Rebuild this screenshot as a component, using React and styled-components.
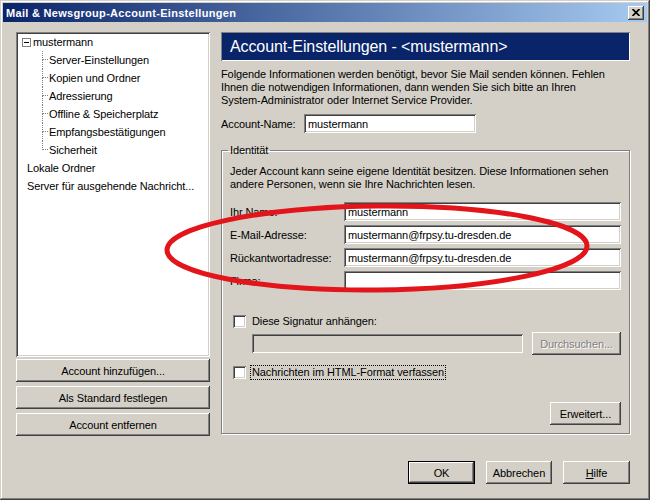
import React from 'react';
import styled, { createGlobalStyle } from 'styled-components';

const FACE = '#d4d0c8';
const raised = `inset -1px -1px #404040, inset 1px 1px #fff, inset -2px -2px #808080, inset 2px 2px ${FACE}`;
const sunken = `inset 1px 1px #808080, inset -1px -1px #fff, inset 2px 2px #404040, inset -2px -2px ${FACE}`;

const Global = createGlobalStyle`
  html, body { margin: 0; padding: 0; background: ${FACE}; }
  body { font-family: "Liberation Sans", Arial, sans-serif; font-size: 11px; color: #000; }
  * { box-sizing: border-box; }
`;

const Window = styled.div`
  position: relative;
  width: 650px;
  height: 500px;
  padding: 3px;
  background: ${FACE};
  box-shadow: inset -1px -1px #404040, inset 1px 1px ${FACE}, inset -2px -2px #808080, inset 2px 2px #fff;
  display: flex;
  flex-direction: column;
  font-family: "Liberation Sans", Arial, sans-serif;
  font-size: 11px;
  letter-spacing: -0.1px;
`;

const TitleBar = styled.div`
  height: 19px;
  flex: none;
  display: flex;
  align-items: center;
  justify-content: space-between;
  padding: 0 3px 0 3px;
  background: linear-gradient(to right, #0a246a, #a6caf0);
`;

const TitleText = styled.span`
  color: #fff;
  font-weight: bold;
  letter-spacing: 0.3px;
`;

const CloseButton = styled.div`
  width: 16px;
  height: 14px;
  background: ${FACE};
  box-shadow: ${raised};
  display: flex;
  align-items: center;
  justify-content: center;
  padding-bottom: 1px;
`;

const Main = styled.div`
  display: flex;
  gap: 11px;
  padding: 10px 17px 0 13px;
`;

const LeftColumn = styled.div`
  width: 194px;
  flex: none;
  display: flex;
  flex-direction: column;
  gap: 4px;
`;

const TreeBox = styled.div`
  height: 325px;
  background: #fff;
  box-shadow: ${sunken};
  padding: 1px 2px 2px;
  margin-bottom: -2px;
`;

const TreeRow = styled.div`
  height: 18px;
  display: flex;
  align-items: center;
  padding-left: ${p => p.$indent}px;
  white-space: nowrap;
`;

const Twisty = styled.span`
  width: 9px;
  height: 9px;
  border: 1px solid #808080;
  background: #fff;
  display: flex;
  align-items: center;
  justify-content: center;
  margin-right: 2px;
  flex: none;
`;

const Dash = styled.span`
  width: 5px;
  height: 1px;
  background: #000;
`;

const Connector = styled.span`
  align-self: stretch;
  width: 6px;
  flex: none;
  display: flex;
  flex-direction: column;
  margin-right: 1px;
`;

const ConnectorTop = styled.span`
  height: 9px;
  border-left: 1px dotted #808080;
  border-bottom: 1px dotted #808080;
`;

const ConnectorBottom = styled.span`
  flex: 1;
  border-left: ${p => (p.$last ? 'none' : '1px dotted #808080')};
`;

const Button = styled.div`
  height: 23px;
  width: ${p => (p.$width ? `${p.$width}px` : 'auto')};
  display: flex;
  align-items: center;
  justify-content: center;
  background: ${FACE};
  box-shadow: ${p =>
    p.$default
      ? `inset 0 0 0 1px #000, inset -2px -2px #404040, inset 2px 2px #fff, inset -3px -3px #808080`
      : raised};
  color: ${p => (p.$disabled ? '#808080' : '#000')};
  text-shadow: ${p => (p.$disabled ? '1px 1px #fff' : 'none')};
  white-space: nowrap;
  flex: none;
`;

const RightColumn = styled.div`
  width: 409px;
  flex: none;
  display: flex;
  flex-direction: column;
`;

const Header = styled.div`
  height: 29px;
  background: #0a246a;
  box-shadow: inset 1px 1px #808080, inset -1px -1px #fff;
  color: #fff;
  font-size: 16px;
  letter-spacing: -0.1px;
  display: flex;
  align-items: center;
  padding-left: 9px;
`;

const Paragraph = styled.p`
  margin: ${p => p.$margin || '0'};
  line-height: 13px;
  white-space: nowrap;
`;

const NameRow = styled.div`
  display: flex;
  align-items: center;
  margin-top: 7px;
`;

const Label = styled.span`
  width: ${p => p.$width}px;
  flex: none;
  white-space: nowrap;
`;

const TextField = styled.div`
  height: 19px;
  width: ${p => (p.$width ? `${p.$width}px` : 'auto')};
  flex: ${p => (p.$width ? 'none' : '1')};
  background: ${p => (p.$disabled ? FACE : '#fff')};
  box-shadow: ${sunken};
  display: flex;
  align-items: center;
  padding: 0 4px;
  white-space: nowrap;
  overflow: hidden;
`;

const GroupBox = styled.fieldset`
  margin: 11px 0 0;
  padding: 0 8px 6px 8px;
  height: 290px;
  border: 1px solid #808080;
  box-shadow: inset 1px 1px #fff, 1px 1px #fff;
  display: flex;
  flex-direction: column;
  min-width: 0;
`;

const Legend = styled.legend`
  padding: 0 2px;
  margin-left: -2px;
  line-height: 13px;
`;

const FieldRows = styled.div`
  display: flex;
  flex-direction: column;
  gap: 4px;
  margin-top: 11px;
`;

const FieldRow = styled.div`
  display: flex;
  align-items: center;
`;

const CheckRow = styled.div`
  display: flex;
  align-items: center;
  height: 15px;
  margin-top: ${p => p.$top}px;
  padding-left: 3px;
`;

const CheckBox = styled.span`
  width: 13px;
  height: 13px;
  flex: none;
  background: #fff;
  box-shadow: ${sunken};
  margin-right: 5px;
`;

const CheckLabel = styled.span`
  padding: 0 1px;
  border: 1px dotted ${p => (p.$focus ? '#000' : 'transparent')};
  margin-left: -1px;
  line-height: 13px;
  white-space: nowrap;
`;

const SignatureRow = styled.div`
  display: flex;
  align-items: center;
  gap: 9px;
  margin-top: 3px;
  padding-left: 22px;
`;

const ActionRow = styled.div`
  display: flex;
  justify-content: flex-end;
  margin-top: ${p => p.$top}px;
  gap: ${p => p.$gap || 0}px;
`;

const Underline = styled.span`
  text-decoration: underline;
`;

const Overlay = styled.svg`
  position: absolute;
  left: 0;
  top: 0;
  pointer-events: none;
`;

const treeChildren = [
  'Server-Einstellungen',
  'Kopien und Ordner',
  'Adressierung',
  'Offline & Speicherplatz',
  'Empfangsbestätigungen',
  'Sicherheit',
];

const identityFields = [
  ['Ihr Name:', 'mustermann'],
  ['E-Mail-Adresse:', 'mustermann@frpsy.tu-dresden.de'],
  ['Rückantwortadresse:', 'mustermann@frpsy.tu-dresden.de'],
  ['Firma:', ''],
];

export default function App() {
  return (
    <>
      <Global />
      <Window>
        <TitleBar>
          <TitleText>Mail &amp; Newsgroup-Account-Einstellungen</TitleText>
          <CloseButton>
            <svg width="8" height="7" viewBox="0 0 8 7">
              <path d="M0.5 0 L7.5 7 M7.5 0 L0.5 7" stroke="#000" strokeWidth="1.7" />
            </svg>
          </CloseButton>
        </TitleBar>
        <Main>
          <LeftColumn>
            <TreeBox>
              <TreeRow $indent={4}>
                <Twisty><Dash /></Twisty>
                mustermann
              </TreeRow>
              {treeChildren.map((t, i) => (
                <TreeRow key={t} $indent={24}>
                  <Connector>
                    <ConnectorTop />
                    <ConnectorBottom $last={i === treeChildren.length - 1} />
                  </Connector>
                  {t}
                </TreeRow>
              ))}
              <TreeRow $indent={9}>Lokale Ordner</TreeRow>
              <TreeRow $indent={9}>Server für ausgehende Nachricht...</TreeRow>
            </TreeBox>
            <Button>Account hinzufügen...</Button>
            <Button>Als Standard festlegen</Button>
            <Button>Account entfernen</Button>
          </LeftColumn>
          <RightColumn>
            <Header>Account-Einstellungen - &lt;mustermann&gt;</Header>
            <Paragraph $margin="7px 0 0">
              Folgende Informationen werden benötigt, bevor Sie Mail senden können. Fehlen
              <br />
              Ihnen die notwendigen Informationen, dann wenden Sie sich bitte an Ihren
              <br />
              System-Administrator oder Internet Service Provider.
            </Paragraph>
            <NameRow>
              <Label $width={83}>Account-Name:</Label>
              <TextField $width={172}>mustermann</TextField>
            </NameRow>
            <GroupBox>
              <Legend>Identität</Legend>
              <Paragraph $margin="8px 0 0">
                Jeder Account kann seine eigene Identität besitzen. Diese Informationen sehen
                <br />
                andere Personen, wenn sie Ihre Nachrichten lesen.
              </Paragraph>
              <FieldRows>
                {identityFields.map(([label, value]) => (
                  <FieldRow key={label}>
                    <Label $width={114}>{label}</Label>
                    <TextField>{value}</TextField>
                  </FieldRow>
                ))}
              </FieldRows>
              <CheckRow $top={24}>
                <CheckBox />
                <CheckLabel>Diese Signatur anhängen:</CheckLabel>
              </CheckRow>
              <SignatureRow>
                <TextField $width={271} $disabled />
                <Button $width={89} $disabled>Durchsuchen...</Button>
              </SignatureRow>
              <CheckRow $top={10}>
                <CheckBox />
                <CheckLabel $focus>Nachrichten im HTML-Format verfassen</CheckLabel>
              </CheckRow>
              <ActionRow $top={22}>
                <Button $width={71}>Erweitert...</Button>
              </ActionRow>
            </GroupBox>
            <ActionRow $top={27} $gap={11}>
              <Button $width={67} $default>OK</Button>
              <Button $width={66}>Abbrechen</Button>
              <Button $width={67}><span><Underline>H</Underline>ilfe</span></Button>
            </ActionRow>
          </RightColumn>
        </Main>
        <Overlay width="650" height="500" viewBox="0 0 650 500">
          <ellipse
            cx="377"
            cy="248"
            rx="210"
            ry="42"
            fill="none"
            stroke="#e3141a"
            strokeWidth="5"
            transform="rotate(-0.6 377 248)"
          />
        </Overlay>
      </Window>
    </>
  );
}
